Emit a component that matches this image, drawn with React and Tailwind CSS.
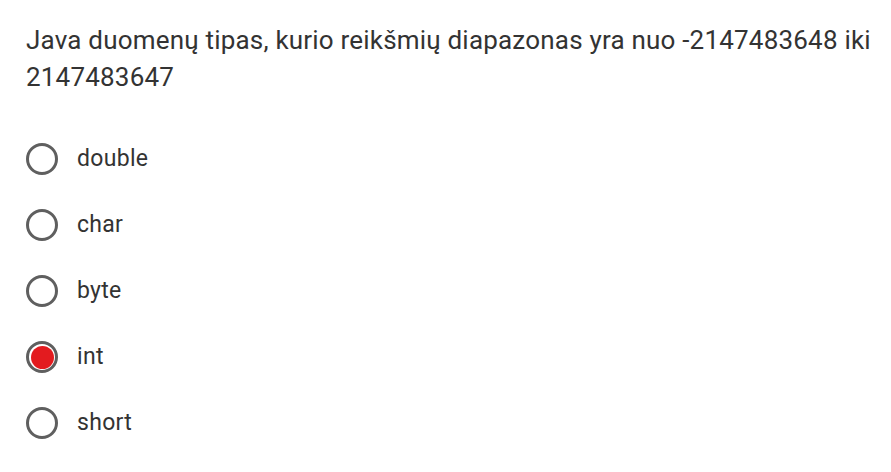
import React, { useState } from 'react';

const options = ['double', 'char', 'byte', 'int', 'short'];

const Radio = ({ checked }) => (
  <span className="flex h-[32px] w-[32px] shrink-0 items-center justify-center rounded-full border-[3px] border-[#5f5f5f]">
    {checked && <span className="h-[23px] w-[23px] rounded-full bg-[#e31b1f]" />}
  </span>
);

const App = () => {
  const [selected, setSelected] = useState('int');

  return (
    <div className="min-h-screen bg-white pl-[26px] pr-[14px] pt-[22px] font-['Roboto',_'Liberation_Sans',_sans-serif] text-[#333333]">
      <p className="text-[26px] leading-[37px] tracking-[0.2px]">
        Java duomenų tipas, kurio reikšmių diapazonas yra nuo -2147483648 iki 2147483647
      </p>
      <div className="mt-[30px] flex flex-col">
        {options.map((opt) => (
          <label
            key={opt}
            onClick={() => setSelected(opt)}
            className="flex h-[66px] cursor-pointer items-center gap-[19px] text-[23px] tracking-[0.3px]"
          >
            <Radio checked={selected === opt} />
            <span>{opt}</span>
          </label>
        ))}
      </div>
    </div>
  );
};

export default App;
